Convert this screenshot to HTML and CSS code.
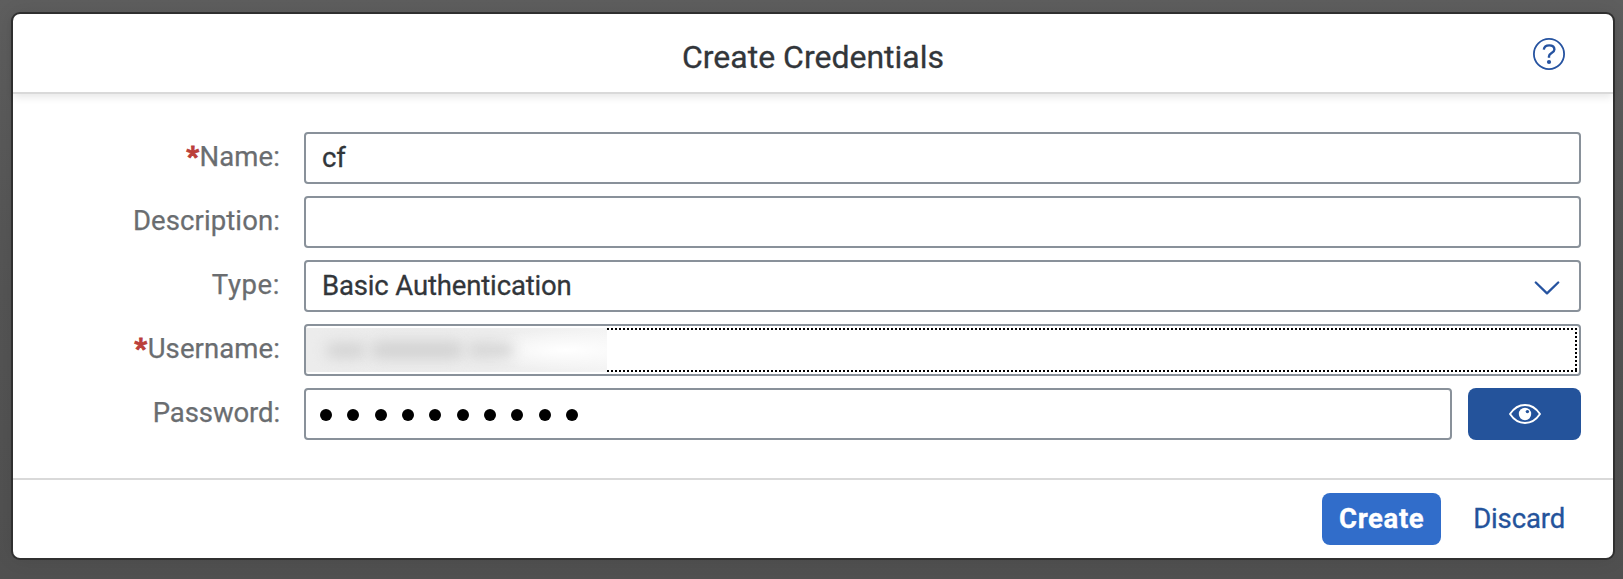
FILE: index.html
```html
<!DOCTYPE html>
<html lang="en">
<head>
<meta charset="utf-8">
<title>Create Credentials</title>
<link rel="stylesheet" href="styles.css">
</head>
<body>
<main class="dialog">
  <header class="header">
    <h1 class="title">Create Credentials</h1>
    <svg class="help" width="32" height="32" viewBox="0 0 32 32" fill="none" stroke="#2653a0" aria-label="Help">
      <circle cx="16" cy="16" r="15.1" stroke-width="1.8"/>
      <path d="M10.8 11.6C11.2 8.6 13.2 7.4 16.2 7.4C19.4 7.4 21.4 9.1 21.4 11.5C21.4 15.1 16 15 16 18.2V19.8" stroke-width="2.4"/>
      <circle cx="16" cy="24" r="2.1" fill="#2653a0" stroke="none"/>
    </svg>
  </header>
  <form class="form">
    <div class="row">
      <label class="label"><span class="req">*</span><span class="name">Name:</span></label>
      <div class="field"><span class="value">cf</span></div>
    </div>
    <div class="row">
      <label class="label description">Description:</label>
      <div class="field"></div>
    </div>
    <div class="row">
      <label class="label type">Type:</label>
      <div class="field select"><span class="value">Basic Authentication</span>
        <svg width="26" height="14" viewBox="0 0 26 14" fill="none" stroke="#2653a0" stroke-width="2.3" stroke-linecap="round" stroke-linejoin="round"><path d="M1.8 1.5L13 12.3L24.2 1.5"/></svg>
      </div>
    </div>
    <div class="row">
      <label class="label"><span class="req">*</span><span>Username:</span></label>
      <div class="field user">
        <div class="masked"><i class="smudge s1"></i><i class="smudge s2"></i><i class="smudge s3"></i></div>
        <div class="focus"></div>
      </div>
    </div>
    <div class="row">
      <label class="label pass">Password:</label>
      <div class="field password"><i class="dot"></i><i class="dot"></i><i class="dot"></i><i class="dot"></i><i class="dot"></i><i class="dot"></i><i class="dot"></i><i class="dot"></i><i class="dot"></i><i class="dot"></i></div>
      <button class="reveal" type="button" aria-label="Show password">
        <svg width="32" height="20" viewBox="0 0 32 20"><path d="M1 10C5 4 10 1 16 1S27 4 31 10C27 16 22 19 16 19S5 16 1 10Z" fill="none" stroke="#fff" stroke-width="1.9" stroke-linejoin="round"/><circle cx="16" cy="10" r="6.2" fill="#fff"/><circle cx="18.4" cy="7.6" r="1.7" fill="#24539b"/></svg>
      </button>
    </div>
  </form>
  <footer class="footer">
    <button class="btn primary" type="button">Create</button>
    <button class="btn" type="button">Discard</button>
  </footer>
</main>
</body>
</html>
```
FILE: styles.css
```css
* { box-sizing: border-box; }
html { height: 579px; overflow: hidden; }
body {
  margin: 0;
  height: 579px;
  padding: 14px 10px 21px 13px;
  overflow: hidden;
  background: linear-gradient(#5e5e5e, #545454 50%, #505050);
  font-family: Roboto, "Liberation Sans", sans-serif;
  font-size: 27.5px;
  color: #32363a;
}
.dialog {
  display: flex;
  flex-direction: column;
  height: 544px;
  background: #fff;
  border-radius: 7px;
  box-shadow: 0 0 0 2px #303030, 0 0 20px rgba(0, 0, 0, .1);
}
.header {
  display: grid;
  grid-template-columns: 80px 1fr 80px;
  align-items: center;
  height: 80px;
  border-bottom: 2px solid #d9d9d9;
  box-shadow: 0 4px 8px -1px rgba(0, 0, 0, .1);
}
.title {
  grid-column: 2;
  margin: 8px 0 0;
  text-align: center;
  font-size: 32px;
  line-height: 38px;
  font-weight: 400;
  -webkit-text-stroke: .3px currentColor;
}
.help { margin-bottom: -2px; }
.form {
  display: flex;
  flex-direction: column;
  gap: 12px;
  flex: 1;
  padding: 38px 32px 0 0;
}
.row { display: flex; height: 52px; }
.label {
  width: 291px;
  padding-right: 24px;
  text-align: right;
  line-height: 50px;
  letter-spacing: .1px;
  color: #6a6d70;
  -webkit-text-stroke: .25px currentColor;
}
.type { letter-spacing: .6px; }
.pass { letter-spacing: -.1px; }
.req { color: #bb3f3a; font-weight: 900; letter-spacing: .6px; -webkit-text-stroke: .8px currentColor; }
.field {
  flex: 1;
  display: flex;
  align-items: center;
  border: 2px solid #89919a;
  border-radius: 4px;
  padding: 0 16px;
  line-height: 46px;
  background: #fff;
}
.value { letter-spacing: -.15px; margin-top: -1px; -webkit-text-stroke: .3px currentColor; }
.select { justify-content: space-between; padding-right: 19px; }
.select svg { margin-top: 3px; }
.user { padding: 2px 2px 2px 0; }
.masked {
  display: flex;
  align-items: center;
  gap: 5px;
  width: 301px;
  height: 44px;
  padding-left: 20px;
  overflow: hidden;
  background: radial-gradient(ellipse 100px 20px at 260px 22px, #fff, rgba(255, 255, 255, 0)), linear-gradient(90deg, #ececec, #ededed 60%, #f4f4f4);
}
.smudge { height: 15px; border-radius: 8px; background: #d2d2d2; filter: blur(7px); }
.s1 { width: 40px; }
.s2 { width: 92px; height: 18px; }
.s3 { width: 46px; height: 14px; }
.focus {
  flex: 1;
  height: 44px;
  background:
    repeating-linear-gradient(90deg, #000 0 2px, #fff 2px 4px) 0 0 / 100% 2px no-repeat,
    repeating-linear-gradient(90deg, #000 0 2px, #fff 2px 4px) 0 100% / 100% 2px no-repeat,
    repeating-linear-gradient(#000 0 2px, #fff 2px 4px) 100% 0 / 2px 100% no-repeat;
}
.password { gap: 15.33px; padding: 1px 14px 0; }
.dot { width: 12px; height: 12px; border-radius: 50%; background: #000; }
.reveal {
  display: grid;
  place-items: center;
  width: 113px;
  margin-left: 16px;
  padding: 0;
  border: 0;
  border-radius: 8px;
  background: #24539b;
}
.footer {
  display: flex;
  justify-content: flex-end;
  gap: 16px;
  height: 80px;
  padding: 13px 32px 0 0;
  border-top: 2px solid #d9d9d9;
}
.btn {
  height: 52px;
  padding: 0 16px 2px;
  border: 0;
  border-radius: 8px;
  background: none;
  color: #24539b;
  font: inherit;
  letter-spacing: -.15px;
  -webkit-text-stroke: .3px currentColor;
}
.primary { width: 119px; padding: 0 0 2px; background: #316dca; color: #fff; font-weight: 700; letter-spacing: .6px; }
```
